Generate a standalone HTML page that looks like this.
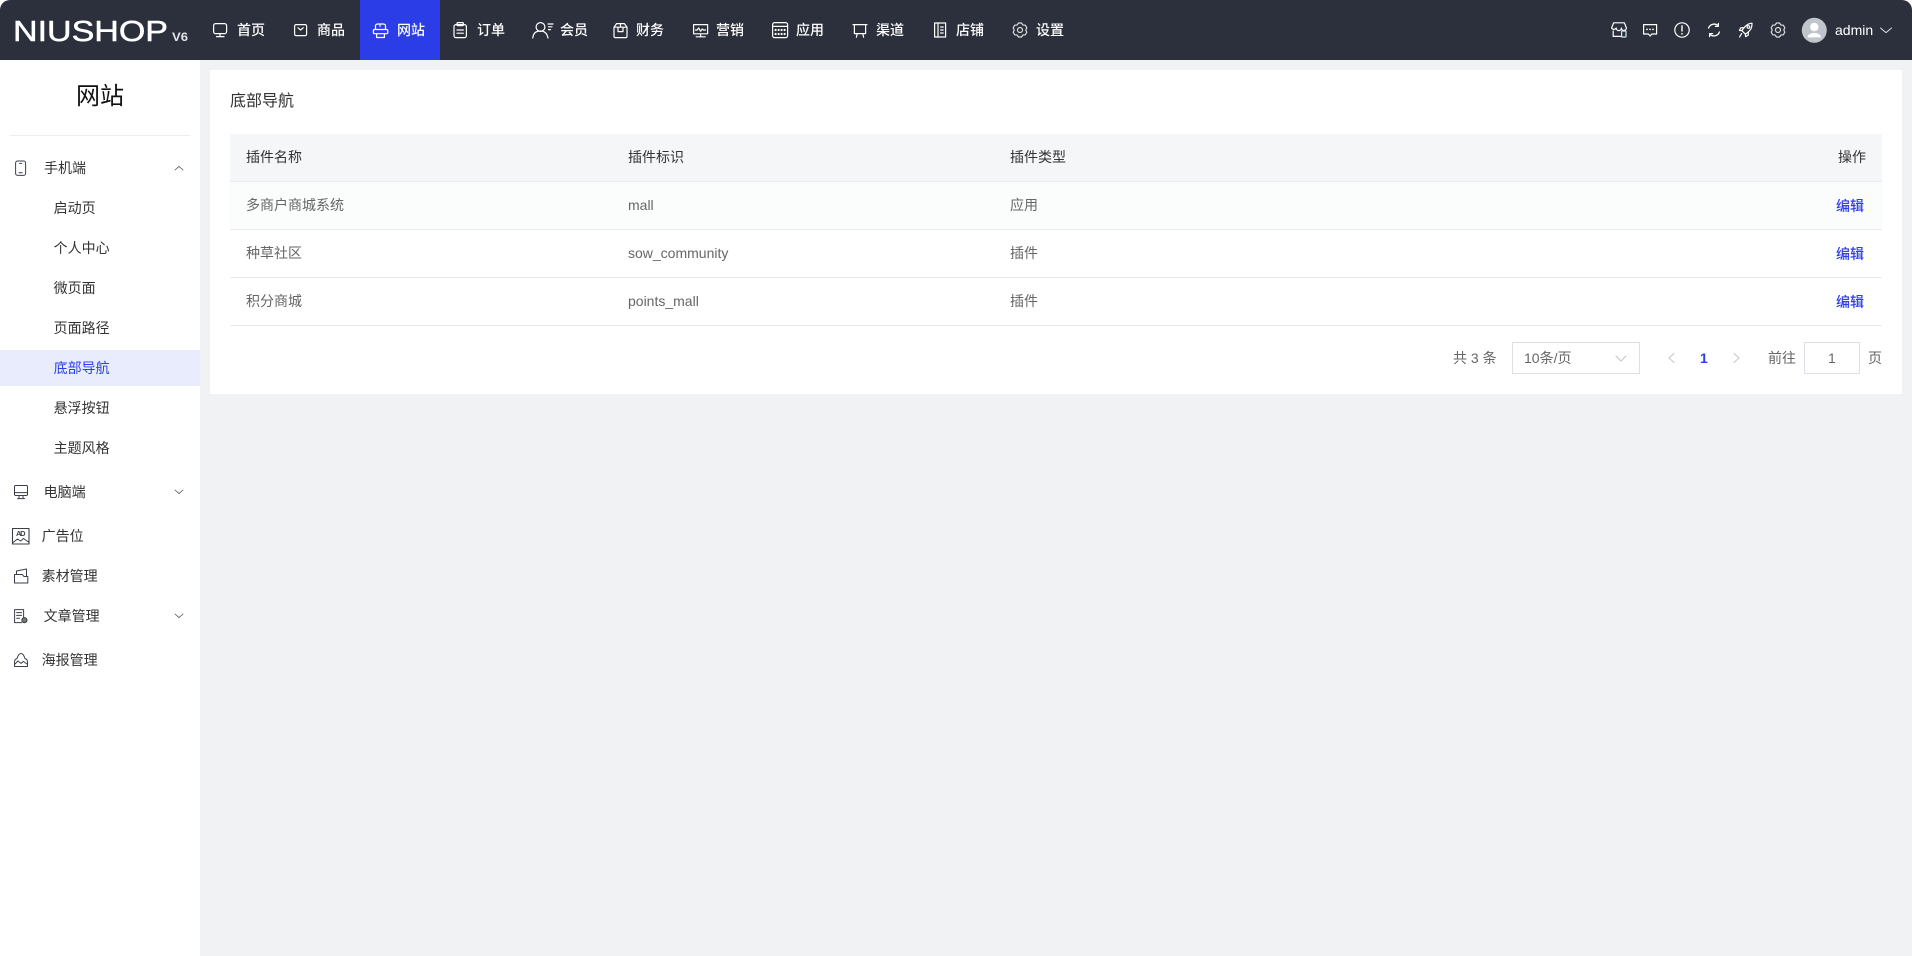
<!DOCTYPE html>
<html lang="zh-CN"><head><meta charset="utf-8"><title>底部导航</title>
<style>
*{box-sizing:border-box}
html,body{margin:0;padding:0;width:1912px;height:956px;overflow:hidden;background:#f1f2f4;font-family:"Liberation Sans","Noto Sans CJK SC",sans-serif;font-size:14px;color:#333}
.a{position:absolute;white-space:nowrap;line-height:20px}
.bx{position:absolute}
.n{color:#fff;font-weight:500;top:20px}
.m{color:#333}
.r{color:#666}
.h{color:#333}
.l{color:#2b3ee6;font-weight:500}
svg{position:absolute;left:0;top:0;overflow:visible}
</style></head><body>
<div class="bx" style="left:0;top:0;width:1912px;height:60px;background:#fff"></div>
<div class="bx" style="left:0;top:0;width:1912px;height:60px;background:#2c303c;border-radius:10px 10px 0 0"></div>
<div class="bx" style="left:360px;top:0;width:80px;height:60px;background:#2a3de6"></div>

<svg width="1912" height="60" fill="none" stroke="#fff" stroke-width="1.2" stroke-linecap="round" stroke-linejoin="round">
<text x="13" y="41" font-family="Liberation Sans" font-size="29" fill="#fff" stroke="#fff" stroke-width=".5" textLength="155" lengthAdjust="spacingAndGlyphs">NIUSHOP</text>
<text x="172" y="41" font-family="Liberation Sans" font-size="12" font-weight="700" fill="#e4e5e8" stroke="none" textLength="16" lengthAdjust="spacingAndGlyphs">V6</text>
<!-- home -->
<rect x="213.6" y="23.6" width="13" height="10" rx="2"/><path d="M220 33.6v3M216.5 36.6h7.5"/>
<!-- goods -->
<rect x="294.6" y="24.6" width="12" height="11" rx="1.5"/><path d="M298 27.8l2.6 2.2 2.6-2.2"/>
<!-- website -->
<path d="M375.5 29v-3a2 2 0 0 1 2-2h6a2 2 0 0 1 2 2v3M374.6 29.5h12a1.2 1.2 0 0 1 1.2 1.2v1.8a1.2 1.2 0 0 1-1.2 1.2h-12a1.2 1.2 0 0 1-1.2-1.2v-1.8a1.2 1.2 0 0 1 1.2-1.2zM376.6 33.7v3.8h7.8v-3.8M380 24.3v2"/>
<!-- order -->
<rect x="454" y="24.6" width="12.4" height="13" rx="2"/><rect x="457" y="22.6" width="6.4" height="3" rx="1"/><path d="M457 30h6.4M457 33.2h6.4"/>
<!-- member -->
<circle cx="540.5" cy="27" r="4.4"/><path d="M532.8 38c.4-4.8 3.3-7 7.7-7 3.6 0 6.4 1.8 7.5 7M548 24h5M548.5 26.8h3.5M548.5 29.6h2"/>
<!-- finance -->
<path d="M614 27.2h13v9a1.4 1.4 0 0 1-1.4 1.4h-10.2a1.4 1.4 0 0 1-1.4-1.4zM614 27.2l2.6-3.6h7.8l2.6 3.6M618 27.2v4.4h5v-4.4M620.5 23.6v3.6"/>
<!-- marketing -->
<rect x="693.6" y="24.6" width="14" height="9.2"/><path d="M695.4 30h1.8l1.4-2 2 3.2 1.6-2.2 1.2 1h2.2M700.6 33.8v2.6M696.2 36.8h9"/>
<!-- app -->
<rect x="772.6" y="22.6" width="15" height="15" rx="2"/><path d="M772.6 26.4h15"/>
<g fill="#fff" stroke="none"><circle cx="775.6" cy="30" r="1.1"/><circle cx="778.6" cy="30" r="1.1"/><circle cx="781.6" cy="30" r="1.1"/><circle cx="784.6" cy="30" r="1.1"/><circle cx="775.6" cy="34" r="1.1"/><circle cx="778.6" cy="34" r="1.1"/><circle cx="781.6" cy="34" r="1.1"/><circle cx="784.6" cy="34" r="1.1"/></g>
<!-- channel -->
<path d="M853 24.6h14M854.4 24.6v9h11.2v-9M857.2 33.6l-.8 3.6M862.8 33.6l.8 3.6"/>
<!-- shop -->
<rect x="934.6" y="23" width="11" height="14"/><path d="M938 23v14M940.6 27h2.6M940.6 30h2.6M940.6 33h2.6"/>
<!-- settings -->
<g stroke="#d8d9dc" transform="translate(1020 30)"><path d="M-1.500-7H1.500L2.900-5 5.310-4.800 6.810-2.200 5.800 0 6.810 2.200 5.310 4.800 2.900 5 1.500 7H-1.500L-2.900 5-5.310 4.800-6.810 2.200-5.800 0-6.810-2.200-5.310-4.800-2.900-5Z"/><circle r="2.500"/></g>
<!-- right icons -->
<path d="M1613.6 22.800h10.800l2 5.200a2.500 2.500 0 0 1-5 0 2.600 2.600 0 0 1-5.200 0 2.600 2.600 0 0 1-4.600 0zM1613.200 31v5.400h8M1625 30v.8"/>
<rect x="1621.6" y="31" width="4.4" height="6" rx=".8" fill="#2c303c" stroke="#cfeaf0"/>
<path d="M1643.6 24.6h13v9.4h-4.8l-1.7 2-1.7-2h-4.8z"/>
<g fill="#fff" stroke="none"><circle cx="1647" cy="29.4" r=".9"/><circle cx="1650" cy="29.4" r=".9"/><circle cx="1653" cy="29.4" r=".9"/></g>
<circle cx="1682" cy="30" r="7.2"/><path d="M1682 25.8v5.2M1682 33.6v.5" stroke-width="1.4"/>
<path d="M1708.6 28a5.8 5.8 0 0 1 9.6-2.2M1719.4 32a5.8 5.8 0 0 1-9.6 2.2" stroke-width="1.3"/>
<path d="M1718.4 23.4v3h-3M1709.6 36.6v-3h3" stroke-width="1.2"/>
<path d="M1752 23.2c-3.6.2-5.8 1.8-7.8 4.4l-2.4 3 3.6 3.6 3-2.4c2.6-2 3.8-4.6 3.6-8.6zM1744.2 27.6l-3.4.2-1.4 2.6 2.4.2M1748.4 31.8l-.2 3.4-2.6 1.4-.2-2.4M1741.6 33.6l-2 3.4"/>
<circle cx="1748.4" cy="27" r="1.3"/>
<g stroke="#d8d9dc" transform="translate(1778 30)"><path d="M-1.500-7H1.500L2.900-5 5.310-4.800 6.810-2.200 5.800 0 6.810 2.200 5.310 4.800 2.900 5 1.500 7H-1.500L-2.900 5-5.310 4.800-6.810 2.200-5.800 0-6.810-2.200-5.310-4.800-2.900-5Z"/><circle r="2.500"/></g>
<circle cx="1814.3" cy="30.3" r="12.5" fill="#c0c4cc" stroke="none"/>
<circle cx="1814.3" cy="27" r="4.2" fill="#fff" stroke="none"/>
<path d="M1807.6 37.4c0-3 3-4.4 6.7-4.4s6.7 1.4 6.7 4.4z" fill="#fff" stroke="none"/>
<path d="M1880.5 28l5.5 4.6 5.5-4.6" stroke="#dfe0e3" stroke-width="1"/>
</svg>

<div class="a n" style="left:237px">首页</div>
<div class="a n" style="left:317px">商品</div>
<div class="a n" style="left:397px">网站</div>
<div class="a n" style="left:477px">订单</div>
<div class="a n" style="left:560px">会员</div>
<div class="a n" style="left:636px">财务</div>
<div class="a n" style="left:716px">营销</div>
<div class="a n" style="left:796px">应用</div>
<div class="a n" style="left:876px">渠道</div>
<div class="a n" style="left:956px">店铺</div>
<div class="a n" style="left:1036px">设置</div>
<div class="a" style="left:1835px;top:20px;color:#fff">admin</div>

<!-- sidebar -->
<div class="bx" style="left:0;top:60px;width:200px;height:896px;background:#fff"></div>
<div class="a" style="left:76px;top:80px;font-size:24px;line-height:34px;color:#111">网站</div>
<div class="bx" style="left:10px;top:135px;width:180px;height:1px;background:#eceef3"></div>
<div class="bx" style="left:0;top:350px;width:200px;height:36px;background:#e9ecfc"></div>

<div class="a m" style="left:44px;top:158px">手机端</div>
<div class="a m" style="left:53.600px;top:198px">启动页</div>
<div class="a m" style="left:53.600px;top:238px">个人中心</div>
<div class="a m" style="left:53.600px;top:278px">微页面</div>
<div class="a m" style="left:53.600px;top:318px">页面路径</div>
<div class="a" style="left:53.600px;top:358px;color:#2b3ee6">底部导航</div>
<div class="a m" style="left:53.600px;top:398px">悬浮按钮</div>
<div class="a m" style="left:53.600px;top:438px">主题风格</div>
<div class="a m" style="left:43.600px;top:482px">电脑端</div>
<div class="a m" style="left:41.600px;top:526px">广告位</div>
<div class="a m" style="left:41.600px;top:566px">素材管理</div>
<div class="a m" style="left:43.600px;top:606px">文章管理</div>
<div class="a m" style="left:41.600px;top:650px">海报管理</div>

<svg width="200" height="700" fill="none" stroke="#3a3f4a" stroke-width="1" stroke-linecap="round" stroke-linejoin="round">
<rect x="15.6" y="161" width="10" height="14.4" rx="2"/><path d="M19 172.8h3.2M19.6 163.4h2"/>
<path d="M175 170l4-3.6 4 3.6" stroke="#555" stroke-width=".8"/>
<rect x="14.5" y="485.5" width="13" height="10" rx="1.2"/><path d="M14.5 492.6h13M19 495.5v3M23 495.5v3M17.6 498.6h7"/>
<path d="M175 490l4 3.6 4-3.6" stroke="#555" stroke-width=".8"/>
<rect x="12.5" y="528.500" width="16.5" height="15.500" stroke-width="1.1"/>
<path d="M13 542.500l4.500-3.500 3 2 3-2.500 5 3.500" stroke-width="1"/>
<text x="16" y="536" font-family="Liberation Sans" font-size="7.500" font-weight="700" fill="#3a3f4a" stroke="none" textLength="9.500">AD</text>
<path d="M14.500 574.500h8l1.400 2h3.900v6.500h-13.300zM16.500 574v-3l10-2v7"/>
<path d="M23.6 618v-8.4h-9v13h7M16.6 612.6h5M16.6 615.4h5M16.6 618.2h3"/>
<circle cx="24.4" cy="620.2" r="2.6" fill="#777"/>
<path d="M175 614l4 3.6 4-3.6" stroke="#555" stroke-width=".8"/>
<path d="M14.500 666.500v-4.500c0-2 1-3 2.500-3.500 1-3 2.500-5 4-5s3 2 4 5c1.500.5 2.500 1.500 2.500 3.500v4.500zM14.500 664.500l3.500-3.500 3 2.400 2.400-2 4 3"/>
</svg>

<!-- card -->
<div class="bx" style="left:210px;top:70px;width:1692px;height:324px;background:#fff"></div>
<div class="a" style="left:230px;top:92px;font-size:16px;color:#333">底部导航</div>
<div class="bx" style="left:230px;top:134px;width:1652px;height:48px;background:#f5f6f8;border-bottom:1px solid #e9ebf0"></div>
<div class="bx" style="left:230px;top:182px;width:1652px;height:48px;background:#fbfcfc;border-bottom:1px solid #e9ebf0"></div>
<div class="bx" style="left:230px;top:230px;width:1652px;height:48px;border-bottom:1px solid #e9ebf0"></div>
<div class="bx" style="left:230px;top:278px;width:1652px;height:48px;border-bottom:1px solid #e9ebf0"></div>

<div class="a h" style="left:246px;top:147px">插件名称</div>
<div class="a h" style="left:628px;top:147px">插件标识</div>
<div class="a h" style="left:1010px;top:147px">插件类型</div>
<div class="a h" style="left:1838px;top:147px">操作</div>

<div class="a r" style="left:246px;top:195px">多商户商城系统</div>
<div class="a r" style="left:628px;top:195px">mall</div>
<div class="a r" style="left:1010px;top:195px">应用</div>
<div class="a l" style="left:1836px;top:196px">编辑</div>

<div class="a r" style="left:246px;top:243px">种草社区</div>
<div class="a r" style="left:628px;top:243px">sow_community</div>
<div class="a r" style="left:1010px;top:243px">插件</div>
<div class="a l" style="left:1836px;top:244px">编辑</div>

<div class="a r" style="left:246px;top:291px">积分商城</div>
<div class="a r" style="left:628px;top:291px">points_mall</div>
<div class="a r" style="left:1010px;top:291px">插件</div>
<div class="a l" style="left:1836px;top:292px">编辑</div>

<!-- pagination -->
<div class="a r" style="left:1453px;top:348px">共 3 条</div>
<div class="bx" style="left:1512px;top:342px;width:128px;height:32px;border:1px solid #dcdfe6"></div>
<div class="a r" style="left:1524px;top:348px">10条/页</div>
<div class="a l" style="left:1700px;top:348px;font-weight:700">1</div>
<div class="a r" style="left:1768px;top:348px">前往</div>
<div class="bx" style="left:1804px;top:342px;width:56px;height:32px;border:1px solid #dcdfe6"></div>
<div class="a r" style="left:1828px;top:348px">1</div>
<div class="a r" style="left:1868px;top:348px">页</div>
<svg width="1912" height="400" fill="none" stroke="#c0c4cc" stroke-width="1" stroke-linecap="round" stroke-linejoin="round">
<path d="M1616 356l5 5 5-5"/>
<path d="M1674 353.500l-5 4.500 5 4.500"/>
<path d="M1734 353.500l5 4.500-5 4.500"/>
</svg>
</body></html>
